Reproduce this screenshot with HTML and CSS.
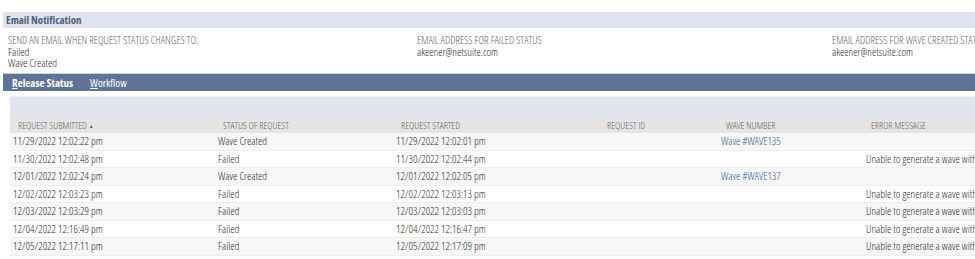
FILE: index.html
```html
<!DOCTYPE html>
<html lang="en">
<head>
    <meta charset="UTF-8">
    <title>Release Status</title>
    <link rel="stylesheet" href="styles.css">
</head>
<body>
    <div class="page">
        <div class="section-title">Email Notification</div>

        <div class="fields">
            <div class="field">
                <div class="field-label">Send an email when request status changes to:</div>
                <div class="field-value">Failed</div>
                <div class="field-value">Wave Created</div>
            </div>
            <div class="field">
                <div class="field-label">Email address for failed status</div>
                <div class="field-value">akeener@netsuite.com</div>
            </div>
            <div class="field">
                <div class="field-label">Email address for wave created status</div>
                <div class="field-value">akeener@netsuite.com</div>
            </div>
        </div>

        <div class="tabs">
            <span class="tab active"><u>R</u>elease Status</span>
            <span class="tab"><u>W</u>orkflow</span>
        </div>

        <div class="tab-body">
            <div class="list-bar"></div>
            <table class="list">
                <colgroup>
                    <col class="c1"><col class="c2"><col class="c3"><col class="c4"><col class="c5"><col class="c6">
                </colgroup>
                <thead>
                    <tr>
                        <th>Request Submitted <span class="sort">&#9650;</span></th>
                        <th>Status of Request</th>
                        <th>Request Started</th>
                        <th>Request ID</th>
                        <th>Wave Number</th>
                        <th>Error Message</th>
                    </tr>
                </thead>
                <tbody>
                    <tr>
                        <td>11/29/2022 12:02:22 pm</td><td>Wave Created</td><td>11/29/2022 12:02:01 pm</td><td></td>
                        <td><a href="#">Wave #WAVE135</a></td><td></td>
                    </tr>
                    <tr>
                        <td>11/30/2022 12:02:48 pm</td><td>Failed</td><td>11/30/2022 12:02:44 pm</td><td></td>
                        <td></td><td>Unable to generate a wave with the selected orders</td>
                    </tr>
                    <tr>
                        <td>12/01/2022 12:02:24 pm</td><td>Wave Created</td><td>12/01/2022 12:02:05 pm</td><td></td>
                        <td><a href="#">Wave #WAVE137</a></td><td></td>
                    </tr>
                    <tr>
                        <td>12/02/2022 12:03:23 pm</td><td>Failed</td><td>12/02/2022 12:03:13 pm</td><td></td>
                        <td></td><td>Unable to generate a wave with the selected orders</td>
                    </tr>
                    <tr>
                        <td>12/03/2022 12:03:29 pm</td><td>Failed</td><td>12/03/2022 12:03:03 pm</td><td></td>
                        <td></td><td>Unable to generate a wave with the selected orders</td>
                    </tr>
                    <tr>
                        <td>12/04/2022 12:16:49 pm</td><td>Failed</td><td>12/04/2022 12:16:47 pm</td><td></td>
                        <td></td><td>Unable to generate a wave with the selected orders</td>
                    </tr>
                    <tr>
                        <td>12/05/2022 12:17:11 pm</td><td>Failed</td><td>12/05/2022 12:17:09 pm</td><td></td>
                        <td></td><td>Unable to generate a wave with the selected orders</td>
                    </tr>
                </tbody>
            </table>
        </div>
    </div>
</body>
</html>
```

FILE: styles.css
```css
html, body { margin: 0; overflow: hidden; background: #fff; }
body { font-family: "Open Sans", "DejaVu Sans", sans-serif; font-size: 10.9px; font-weight: 300; color: #2b2b2b; font-stretch: 75%; }
.page { padding: 12px 0 0 3px; width: 1200px; }

.section-title { background: #dfe4ee; color: #4d5f79; font-weight: bold; font-size: 10.9px; height: 16px; line-height: 16px; padding-left: 3px; }

.fields { display: grid; grid-template-columns: 409px 415px 400px; padding: 7px 0 0 5px; height: 38px; }
.field-label { text-transform: uppercase; color: #666; font-size: 10.7px; line-height: 11px; }
.field-value { line-height: 11px; }

.tabs { background: #5f7494; border-top: 1px solid #c9d0db; height: 17px; display: flex; align-items: center; padding-left: 9px; gap: 17px; }
.tab { color: #fff; font-size: 11px; font-weight: 400; position: relative; }
.tab.active { font-weight: bold; }
.tab.active::after { content: ""; position: absolute; left: 30px; bottom: -5px; border: 4px solid transparent; border-bottom-color: #fff; border-top: 0; }

.tab-body { padding: 5px 0 0 7px; }
.list-bar { background: #e0e6ef; height: 19px; border-top: 1px solid #eef1f6; }

.list { border-collapse: collapse; table-layout: fixed; width: 1150px; }
.list col.c1 { width: 205px; }
.list col.c2 { width: 178px; }
.list col.c3 { width: 206px; }
.list col.c4 { width: 119px; }
.list col.c5 { width: 145px; }
.list col.c6 { width: 297px; }
.list th { background: #e5e5e5; color: #666; font-weight: 300; text-transform: uppercase; font-size: 9.9px; height: 17px; padding: 0 0 0 8px; text-align: left; }
.list .sort { font-size: 5px; vertical-align: 1px; }
.list td { height: 15.5px; padding: 0 0 1px 3px; white-space: nowrap; overflow: hidden; border-bottom: 1px solid #eeeeee; line-height: 15px; }
.list tbody tr:nth-child(odd) td { background: #f7f7f7; }
.list a { color: #2f5a98; text-decoration: none; }
```
